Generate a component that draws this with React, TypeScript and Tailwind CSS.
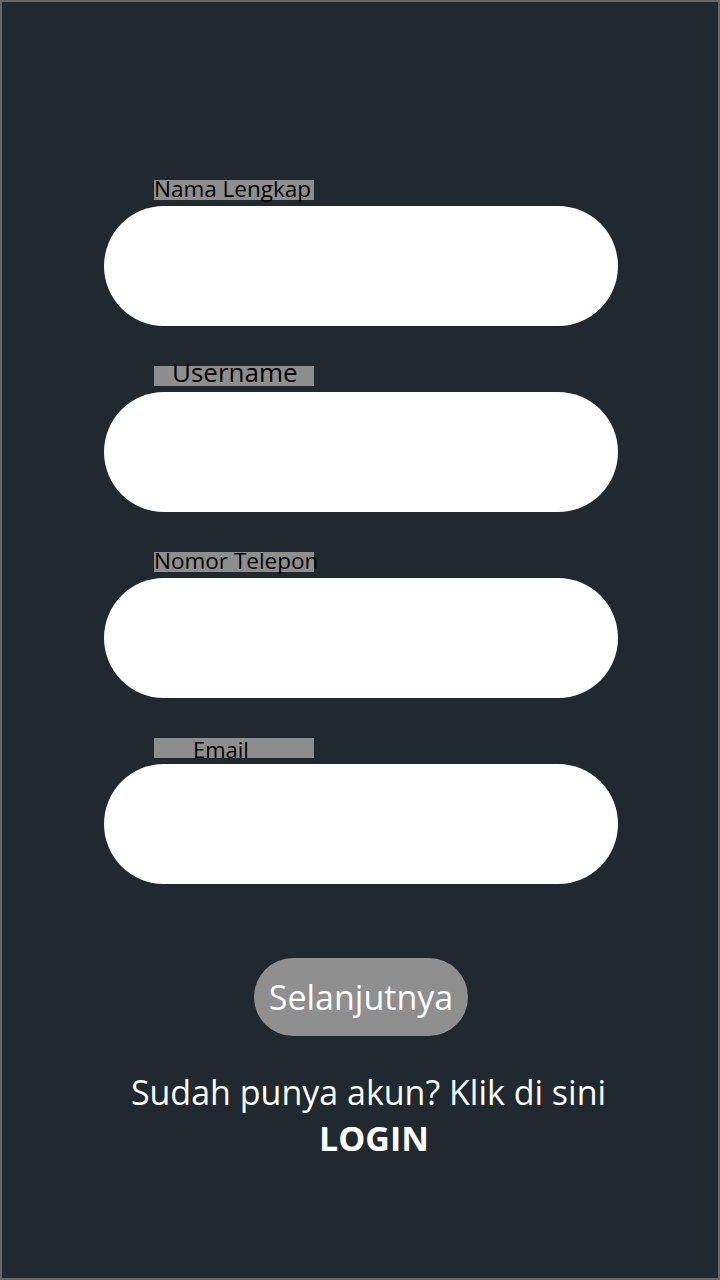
const Field = ({ label, labelClass }: { label: string; labelClass: string }) => {
  return (
    <div className="flex flex-col">
      <div className="ml-[50px] h-5 w-40 bg-[#8e8e8e] text-black leading-5 whitespace-nowrap">
        <p className={labelClass}>{label}</p>
      </div>
      <div className="mt-[6px] h-[120px] w-[514px] rounded-full bg-white"></div>
    </div>
  );
};

const App = () => {
  return (
    <div
      className="h-[1280px] w-[720px] border-2 border-[#676767] bg-[#1f292f] font-['Open_Sans',sans-serif]"
    >
      <div className="flex flex-col items-center pl-[2px]">
        <div className="mt-[178px] flex flex-col gap-10">
          <Field label="Nama Lengkap" labelClass="-mt-[1px] text-[22.5px] leading-5" />
          <Field label="Username" labelClass="-mt-[6px] ml-[18px] text-[26px] leading-6" />
          <Field label="Nomor Telepon" labelClass="-mt-[1px] text-[22.5px] leading-5" />
          <Field label="Email" labelClass="mt-[1px] ml-[39px] text-[22px] leading-5" />
        </div>

        <button className="mt-[74px] h-[78px] w-[214px] rounded-full bg-[#8f8f8f] text-[34px] text-white">
          Selanjutnya
        </button>

        <p className="mt-[33px] ml-[15px] text-[34px] leading-[46px] text-white">Sudah punya akun? Klik di sini</p>
        <p className="ml-[26px] text-[34px] font-bold leading-[46px] text-white">LOGIN</p>
      </div>
    </div>
  );
};

export default App;
